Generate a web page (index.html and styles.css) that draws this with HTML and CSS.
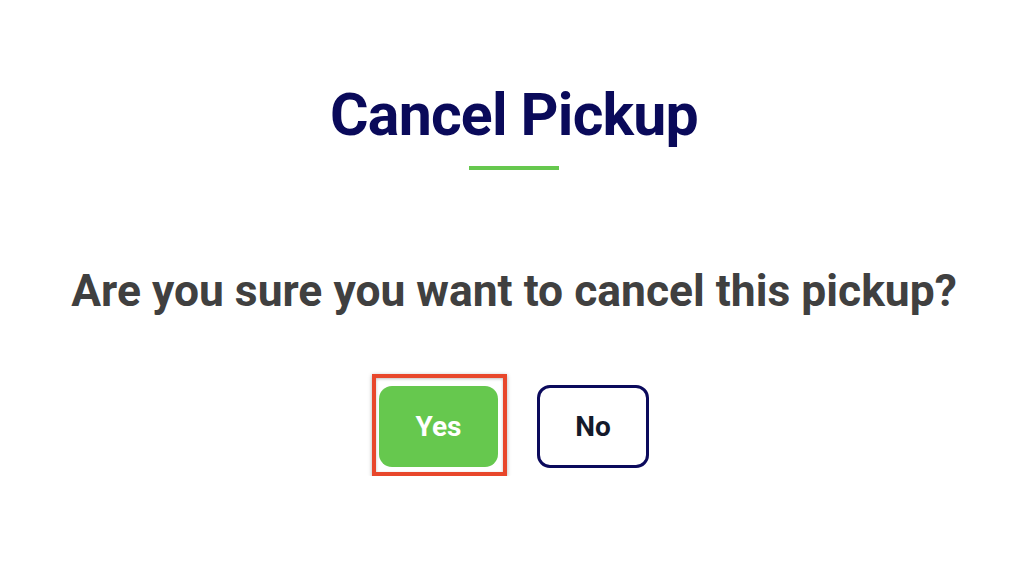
FILE: index.html
```html
<!DOCTYPE html>
<html lang="en">
<head>
    <meta charset="UTF-8">
    <meta name="viewport" content="width=device-width, initial-scale=1.0">
    <title>Cancel Pickup</title>
    <link rel="stylesheet" href="styles.css">
</head>
<body>
    <div class="dialog">
        <h1 class="title">Cancel Pickup</h1>
        <div class="divider"></div>

        <p class="question">Are you sure you want to cancel this pickup?</p>

        <div class="actions">
            <div class="highlight">
                <button class="button yes">Yes</button>
            </div>
            <button class="button no">No</button>
        </div>
    </div>
</body>
</html>
```

FILE: styles.css
```css
body {
    margin: 0;
    background: #ffffff;
    font-family: Roboto, 'Liberation Sans', sans-serif;
}
.dialog {
    width: 1028px;
    display: flex;
    flex-direction: column;
    align-items: center;
}
.title {
    margin: 85px 0 0;
    font-size: 59px;
    line-height: 59px;
    font-weight: 700;
    letter-spacing: -0.8px;
    color: #0a0a5a;
}
.divider {
    width: 90px;
    height: 4px;
    margin-top: 22px;
    background: #66c84e;
}
.question {
    margin: 99px 0 0;
    font-size: 44.4px;
    line-height: 44px;
    font-weight: 700;
    color: #404040;
}
.actions {
    display: flex;
    align-items: flex-start;
    gap: 30px;
    margin: 61px 7px 0 0;
}
.button {
    font-family: Roboto, 'Liberation Sans', sans-serif;
    font-size: 28px;
    font-weight: 700;
    border-radius: 13px;
    cursor: pointer;
    padding: 0;
}
.button.yes {
    display: block;
    width: 119px;
    height: 81px;
    border: none;
    background: #66c84e;
    color: #ffffff;
}
.button.no {
    width: 112px;
    height: 83px;
    margin-top: 11px;
    border: 3px solid #0b0a5c;
    background: #ffffff;
    color: #141a2b;
}
.highlight {
    padding: 8px 5px 5px 3px;
    border: 4px solid #e8472b;
    box-shadow: 0 1px 4px rgba(0, 0, 0, 0.3), inset 0 1px 3px rgba(0, 0, 0, 0.25);
}
```
